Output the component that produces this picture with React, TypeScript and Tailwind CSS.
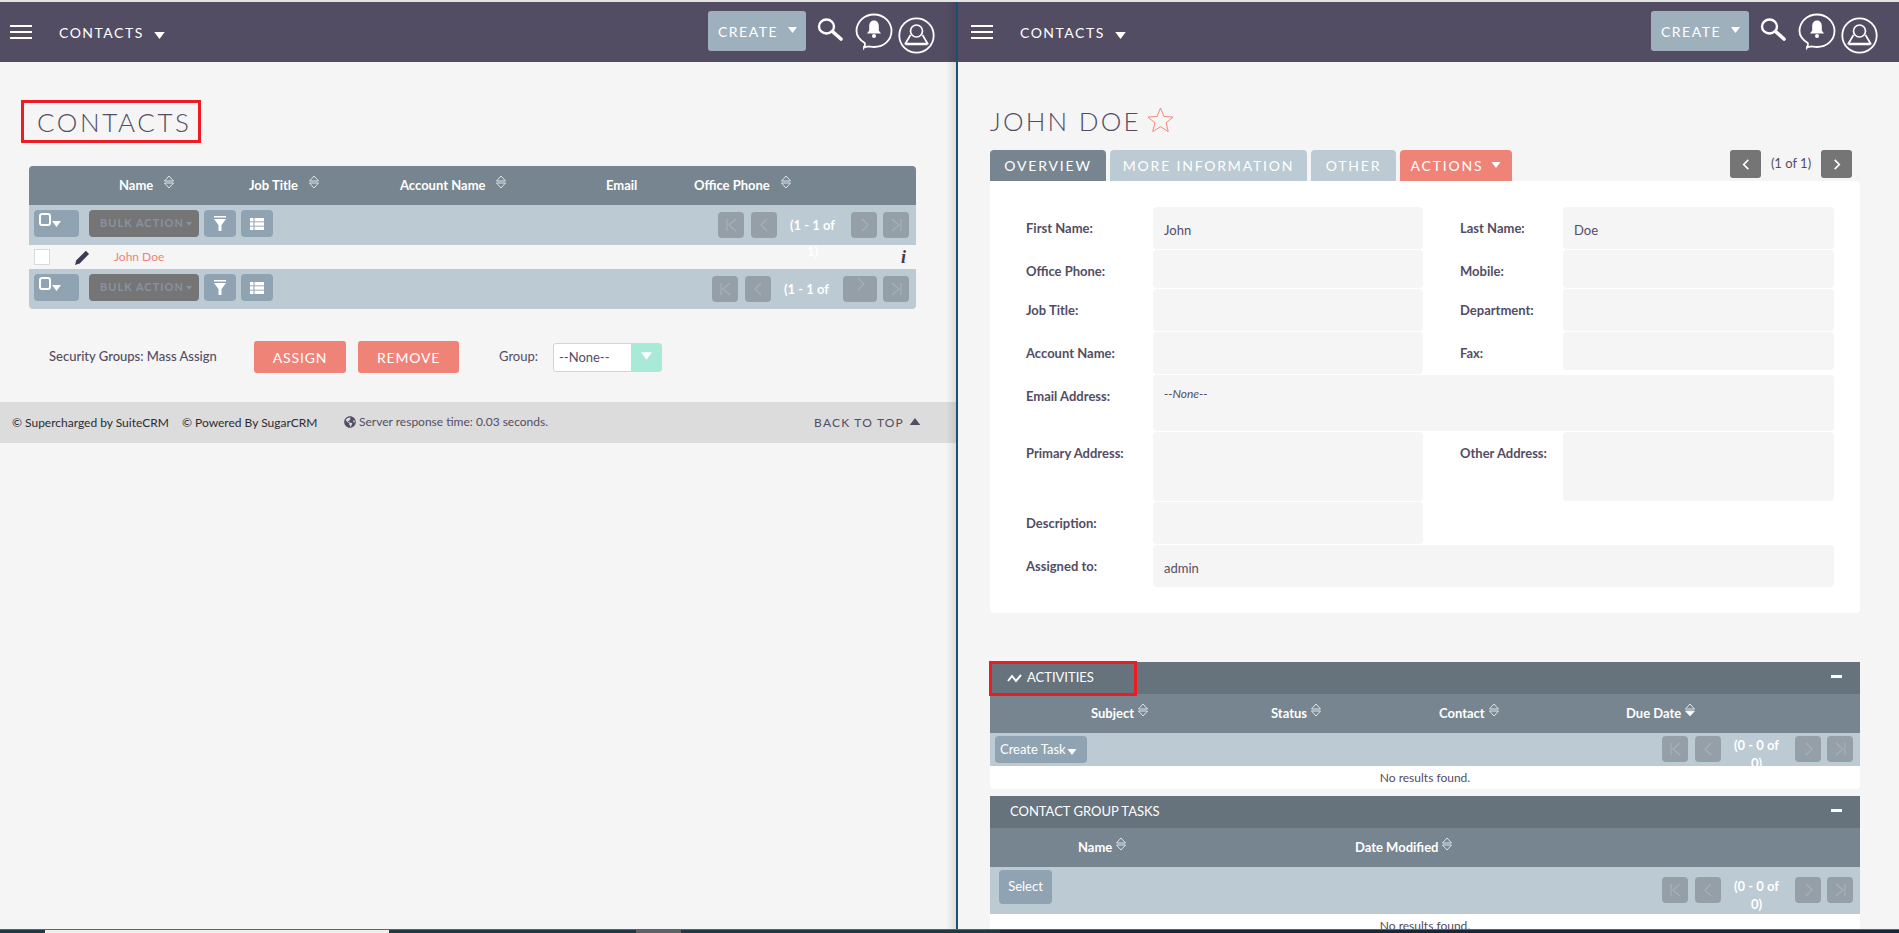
import React from 'react';
import { FaGlobeAmericas } from 'react-icons/fa';

const FONT = "font-['Lato','Open_Sans',sans-serif]";

function Caret({ className = '' }: { className?: string }) {
  return (
    <svg viewBox="0 0 12 8" className={className} fill="currentColor">
      <path d="M0 0h12L6 8z" />
    </svg>
  );
}

function Hamburger() {
  return (
    <svg viewBox="0 0 22 14" className="w-[22px] h-[14px]" fill="#fff">
      <rect y="0" width="22" height="2" />
      <rect y="6" width="22" height="2" />
      <rect y="12" width="22" height="2" />
    </svg>
  );
}

function SearchIcon() {
  return (
    <svg viewBox="0 0 26 23" className="w-[26px] h-[23px] mb-[5px] shrink-0" fill="none" stroke="#fff">
      <ellipse cx="9.5" cy="8.5" rx="7.5" ry="7" strokeWidth="2.4" />
      <path d="M15.5 13.5 24 21" strokeWidth="3.6" strokeLinecap="round" />
    </svg>
  );
}

function BellBubble() {
  return (
    <svg viewBox="0 0 38 39" className="w-[38px] h-[39px] shrink-0" fill="none">
      <path
        d="M9 34.5c1.2-1.8 1.2-3.2.8-4.5C5 27 1.5 22.800 1.500 18 1.500 9 9 1.500 19 1.500S36.500 9 36.500 18 29 34 19 34c-2.500 0-4.800-.5-6-.5-1.200.3-2.400.8-4 .5z"
        stroke="#fff"
        strokeWidth="1.800"
      />
      <path
        d="M19 7.500c-3.300 0-4.800 2.500-4.800 5.500v4.500l-2.200 3h14l-2.200-3V13c0-3-1.500-5.500-4.800-5.500z"
        fill="#fff"
      />
      <circle cx="19" cy="23" r="2" fill="#fff" />
    </svg>
  );
}

function UserCircle() {
  return (
    <svg viewBox="0 0 37 37" className="w-[37px] h-[37px] mt-[7px] shrink-0" fill="none" stroke="#fff">
      <circle cx="18.500" cy="18.500" r="17.200" strokeWidth="1.800" />
      <circle cx="18.500" cy="14" r="6" strokeWidth="1.700" />
      <path d="M12.500 18 7.500 26.500h22L24.500 18" strokeWidth="1.700" />
      <path d="M7.500 27.500h22" strokeWidth="1.500" />
    </svg>
  );
}

function NavBar({ left }: { left: 'narrow' | 'wide' }) {
  return (
    <div className="h-[60px] bg-[#534d64] flex items-center pr-[21px] shrink-0">
      <div className={left === 'narrow' ? 'w-[59px] pl-[10px]' : 'w-[62px] pl-[13px]'}>
        <Hamburger />
      </div>
      <span className="text-white text-[14px] tracking-[1.5px] w-[93px]">CONTACTS</span>
      <Caret className="w-[15px] h-[7px] text-white mt-[7px]" />
      <div className="flex-1" />
      <div className="w-[98px] h-[40px] rounded-[3px] bg-[#9fb0bd] text-white text-[14px] tracking-[1.5px] flex items-center pl-[10px] mr-[11px] mb-[2px]">
        CREATE
        <Caret className="w-[11px] h-[6px] text-white ml-[9px] mb-[2px]" />
      </div>
      <SearchIcon />
      <div className="flex items-center ml-[12px] gap-[5px]">
        <BellBubble />
        <UserCircle />
      </div>
    </div>
  );
}

function SortIcon({ active = false, className = 'mb-[7px]' }: { active?: boolean; className?: string }) {
  return (
    <svg viewBox="0 0 12 14" className={`w-[12px] h-[14px] shrink-0 ${className}`} fill="none" stroke="#dfe5ea" strokeWidth="1">
      <path d="M6 1 10.500 6h-9z" />
      <path d="M1.500 8h9L6 13z" fill={active ? '#fff' : 'none'} />
    </svg>
  );
}

function CheckMenuButton() {
  return (
    <div className="w-[45px] h-[27px] rounded-[4px] bg-[#8fa3b3] flex items-start pl-[5px] pt-[3px]">
      <div className="w-[12px] h-[13px] border-[2px] border-white rounded-[3px]" />
      <Caret className="w-[11px] h-[6px] text-white mt-[8px]" />
    </div>
  );
}

function BulkActionButton() {
  return (
    <div className="w-[110px] h-[27px] rounded-[4px] bg-[#757575] flex items-center pl-[11px] text-[#8593a1] text-[11px] font-bold tracking-[1px] ml-[10px]">
      BULK ACTION
      <Caret className="w-[8px] h-[4px] text-[#8593a1] ml-[1px]" />
    </div>
  );
}

function FilterButton() {
  return (
    <div className="w-[32px] h-[27px] rounded-[4px] bg-[#8fa3b3] flex items-center justify-center ml-[5px]">
      <svg viewBox="0 0 12 15" className="w-[12px] h-[15px]" fill="#fff">
        <rect width="12" height="1.500" />
        <path d="M0 3h12L7.500 9v6h-3V9z" />
      </svg>
    </div>
  );
}

function ListButton() {
  return (
    <div className="w-[32px] h-[27px] rounded-[4px] bg-[#8fa3b3] flex items-center justify-center ml-[5px]">
      <svg viewBox="0 0 14 12" className="w-[14px] h-[12px]" fill="#fff">
        <rect width="3.500" height="3.400" />
        <rect x="4.500" width="9.500" height="3.400" />
        <rect y="4.300" width="3.500" height="3.400" />
        <rect x="4.500" y="4.300" width="9.500" height="3.400" />
        <rect y="8.600" width="3.500" height="3.400" />
        <rect x="4.500" y="8.600" width="9.500" height="3.400" />
      </svg>
    </div>
  );
}

function PagerIcon({ type }: { type: 'first' | 'prev' | 'next' | 'last' }) {
  const paths = {
    first: 'M2 1v12M11 1 4 7l7 6',
    prev: 'M9 1 3 7l6 6',
    next: 'M4 1l6 6-6 6',
    last: 'M11 1v12M2 1l7 6-7 6',
  };
  return (
    <svg viewBox="0 0 13 14" className="w-[13px] h-[14px]" fill="none" stroke="#a3b1bc" strokeWidth="1.300">
      <path d={paths[type]} />
    </svg>
  );
}

function PagerButton({ type, wide = false }: { type: 'first' | 'prev' | 'next' | 'last'; wide?: boolean }) {
  return (
    <div
      className={
        wide
          ? 'w-[34px] h-[26px] rounded-[4px] bg-[#959fa7] flex items-start justify-center pt-[1px]'
          : 'w-[26px] h-[26px] rounded-[4px] bg-[#959fa7] flex items-center justify-center'
      }
    >
      <PagerIcon type={type} />
    </div>
  );
}

function Pager({ label, wideNext = false, raiseText = false }: { label: string; wideNext?: boolean; raiseText?: boolean }) {
  return (
    <div className="flex items-start gap-[6px]">
      <PagerButton type="first" />
      <div className="ml-[1px]">
        <PagerButton type="prev" />
      </div>
      <span
        className={
          raiseText
            ? 'w-[57px] ml-[1px] text-center text-white text-[13px] font-bold leading-[18px]'
            : 'w-[57px] ml-[1px] text-center text-white text-[13px] font-bold leading-[26px]'
        }
      >
        {label}
      </span>
      <div className={wideNext ? 'ml-[2px]' : 'ml-[4px]'}>
        <PagerButton type="next" wide={wideNext} />
      </div>
      <PagerButton type="last" />
    </div>
  );
}

function ListToolbar({ wideNext = false }: { wideNext?: boolean }) {
  return (
    <div className="h-[40px] bg-[#bccad3] flex items-start justify-between pl-[5px] pr-[7px] pt-[5px]">
      <div className="flex">
        <CheckMenuButton />
        <BulkActionButton />
        <FilterButton />
        <ListButton />
      </div>
      <div className="mt-[2px]">
        <Pager label="(1 - 1 of 1)" wideNext={wideNext} />
      </div>
    </div>
  );
}

const listColumns = [
  { label: 'Name', cls: 'w-[130px]', sort: true },
  { label: 'Job Title', cls: 'w-[151px]', sort: true },
  { label: 'Account Name', cls: 'w-[206px]', sort: true },
  { label: 'Email', cls: 'w-[88px]', sort: false },
  { label: 'Office Phone', cls: 'w-[180px]', sort: true },
];

function ContactsPane() {
  return (
    <div className="w-[956px] shrink-0 flex flex-col relative overflow-hidden">
      <NavBar left="narrow" />
      <div className="ml-[21px] mt-[38px] w-[180px] h-[43px] border-[3px] border-[#ed1c24] flex items-center pl-[13px]">
        <h1 className="text-[26px] font-light tracking-[2.600px] text-[#534d64] leading-none">CONTACTS</h1>
      </div>

      <div className="ml-[29px] mt-[23px] w-[887px] rounded-[4px] overflow-hidden">
        <div className="h-[39px] bg-[#778591] flex items-center pl-[90px] text-white text-[13px] font-bold">
          {listColumns.map((c) => (
            <div key={c.label} className={`${c.cls} flex items-center gap-[10px]`}>
              <span>{c.label}</span>
              {c.sort && <SortIcon />}
            </div>
          ))}
        </div>
        <ListToolbar />
        <div className="h-[24px] bg-[#f5f5f5] flex items-center pl-[5px] pr-[10px]">
          <div className="w-[16px] h-[16px] bg-white border border-[#d5dcdf]" />
          <svg viewBox="0 0 16 16" className="w-[15px] h-[15px] ml-[25px]" fill="#3f3a52">
            <path d="M11.500.8 15 4.200 5 14.500 0 16l1.400-5z" />
          </svg>
          <span className="ml-[24px] text-[12px] text-[#f08377]">John Doe</span>
          <div className="flex-1" />
          <span className="font-['Liberation_Serif',serif] italic font-bold text-[18px] text-[#3f3a52] leading-none">i</span>
        </div>
        <ListToolbar wideNext />
      </div>

      <div className="flex items-center h-[32px] mt-[32px] pl-[49px] text-[13px] text-[#534d64]">
        <span className="font-medium w-[205px]">Security Groups: Mass Assign</span>
        <div className="w-[92px] h-[32px] rounded-[3px] bg-[#f08377] text-white text-[14px] tracking-[0.8px] flex items-center justify-center">
          ASSIGN
        </div>
        <div className="w-[101px] h-[32px] rounded-[3px] bg-[#f08377] text-white text-[14px] tracking-[0.8px] flex items-center justify-center ml-[12px]">
          REMOVE
        </div>
        <span className="ml-[40px] w-[54px]">Group:</span>
        <div className="w-[109px] h-[29px] rounded-[3px] border border-[#a9e9d7] bg-white flex items-stretch">
          <span className="flex-1 pl-[5px] text-[13px] leading-[27px]">--None--</span>
          <div className="w-[30px] bg-[#a9e9d7] flex items-start justify-center pt-[7px]">
            <Caret className="w-[11px] h-[10px] text-white" />
          </div>
        </div>
      </div>

      <div className="mt-[29px] h-[41px] bg-[#dcdcdc] flex items-center pl-[12px] pr-[35px] text-[12px]">
        <span className="text-[#2b2b33] w-[170px]">© Supercharged by SuiteCRM</span>
        <span className="text-[#2b2b33] w-[162px]">© Powered By SugarCRM</span>
        <FaGlobeAmericas className="w-[12px] h-[12px] text-[#534d64] mb-[2px]" />
        <span className="ml-[3px] text-[#534d64] mb-[2px]">Server response time: 0.03 seconds.</span>
        <div className="flex-1" />
        <span className="text-[#534d64] text-[12px] tracking-[1.200px]">BACK TO TOP</span>
        <Caret className="w-[12px] h-[7px] text-[#534d64] rotate-180 ml-[5px] mb-[2px]" />
      </div>

      <div className="absolute right-0 top-0 bottom-0 w-[10px] bg-gradient-to-r from-transparent to-black/10" />
    </div>
  );
}

function Field({ children, cls, muted = false }: { children?: React.ReactNode; cls: string; muted?: boolean }) {
  return (
    <div className={`${cls} rounded-[4px] bg-[#f5f5f5] pl-[11px] pt-[13px] text-[13px] leading-[20px] ${muted ? 'text-[#534d64]' : 'text-[#534d64]'}`}>
      {children}
    </div>
  );
}

function Label({ children, cls }: { children: React.ReactNode; cls: string }) {
  return <div className={`${cls} shrink-0 pt-[11px] text-[13px] font-bold leading-[20px] text-[#534d64]`}>{children}</div>;
}

function TwoColRow({
  h,
  a,
  b,
  aValue,
  bValue,
  bShort = false,
}: {
  h: string;
  a: string;
  b?: string;
  aValue?: string;
  bValue?: string;
  bShort?: boolean;
}) {
  return (
    <div className={`flex ${h}`}>
      <Label cls="w-[127px]">{a}</Label>
      <Field cls="w-[270px] h-full">{aValue}</Field>
      {b && (
        <>
          <Label cls="w-[103px] ml-[37px]">{b}</Label>
          <Field cls={bShort ? 'w-[271px] h-[38px]' : 'w-[271px] h-full'}>{bValue}</Field>
        </>
      )}
    </div>
  );
}

function PanelPager() {
  return <Pager label="(0 - 0 of 0)" raiseText />;
}

function PanelHeader({ children }: { children: React.ReactNode }) {
  return (
    <div className="h-[32px] bg-[#66737d] flex items-center text-white text-[13px] pr-[18px]">
      {children}
      <div className="flex-1" />
      <div className="w-[11px] h-[3px] bg-white mb-[4px]" />
    </div>
  );
}

function ColumnHeader({ cols, pl }: { cols: { label: string; cls: string; active?: boolean }[]; pl: string }) {
  return (
    <div className={`h-[39px] bg-[#778591] flex items-center ${pl} text-white text-[13px] font-bold`}>
      {cols.map((c) => (
        <div key={c.label} className={`${c.cls} flex items-center gap-[3px]`}>
          <span>{c.label}</span>
          <SortIcon active={c.active} />
        </div>
      ))}
    </div>
  );
}

function DetailPane() {
  return (
    <div className="flex-1 min-w-0 flex flex-col overflow-hidden">
      <NavBar left="wide" />
      <div className="pl-[32px] pr-[39px]">
        <div className="mt-[43px] mb-[13px] h-[32px] flex items-center">
          <h2 className="text-[26px] font-light tracking-[2.200px] text-[#534d64] leading-none">JOHN DOE</h2>
          <svg viewBox="0 0 28 26" className="w-[27px] h-[25px] ml-[6px] mb-[3px]" fill="none" stroke="#f08377" strokeWidth="1">
            <path d="M14 1l3.600 8.800 9.400.7-7.200 6 2.300 9-8.100-5-8.100 5 2.300-9L1 10.500l9.400-.7z" />
          </svg>
        </div>

        <div className="h-[31px] flex items-start text-white text-[14px] tracking-[1.800px]">
          <div className="w-[116px] h-[31px] rounded-t-[4px] bg-[#778591] flex items-center justify-center">OVERVIEW</div>
          <div className="w-[197px] h-[31px] rounded-t-[4px] bg-[#bccad3] flex items-center justify-center ml-[4px]">MORE INFORMATION</div>
          <div className="w-[85px] h-[31px] rounded-t-[4px] bg-[#bccad3] flex items-center justify-center ml-[4px]">OTHER</div>
          <div className="w-[112px] h-[31px] rounded-t-[4px] bg-[#f08377] flex items-center justify-center gap-[8px] ml-[4px]">
            ACTIONS
            <Caret className="w-[10px] h-[6px] text-white mb-[1px]" />
          </div>
          <div className="flex-1" />
          <div className="flex items-start tracking-normal mr-[8px]">
            <div className="w-[31px] h-[28px] rounded-[3px] bg-[#757575] flex items-center justify-center">
              <svg viewBox="0 0 8 12" className="w-[8px] h-[11px]" fill="none" stroke="#fff" strokeWidth="1.800"><path d="M6.500 1 1.500 6l5 5" /></svg>
            </div>
            <span className="w-[60px] text-center text-[13px] leading-[26px] text-[#534d64]">(1 of 1)</span>
            <div className="w-[31px] h-[28px] rounded-[3px] bg-[#757575] flex items-center justify-center">
              <svg viewBox="0 0 8 12" className="w-[8px] h-[11px]" fill="none" stroke="#fff" strokeWidth="1.800"><path d="M1.500 1l5 5-5 5" /></svg>
            </div>
          </div>
        </div>

        <div className="bg-white rounded-b-[4px] rounded-tr-[4px] pl-[36px] pt-[26px] pb-[26px] flex flex-col gap-[1px]">
          <TwoColRow h="h-[42px]" a="First Name:" b="Last Name:" aValue="John" bValue="Doe" />
          <TwoColRow h="h-[38px]" a="Office Phone:" b="Mobile:" />
          <TwoColRow h="h-[42px]" a="Job Title:" b="Department:" />
          <TwoColRow h="h-[42px]" a="Account Name:" b="Fax:" bShort />
          <div className="flex h-[56px]">
            <Label cls="w-[127px]">Email Address:</Label>
            <div className="w-[681px] h-full rounded-[4px] bg-[#f5f5f5] pl-[11px] pt-[9px] text-[12px] italic leading-[20px] text-[#534d64]">--None--</div>
          </div>
          <TwoColRow h="h-[69px]" a="Primary Address:" b="Other Address:" />
          <TwoColRow h="h-[42px]" a="Description:" />
          <div className="flex h-[42px]">
            <Label cls="w-[127px]">Assigned to:</Label>
            <Field cls="w-[681px] h-full">admin</Field>
          </div>
        </div>

        <div className="mt-[49px] rounded-t-[4px] relative">
          <PanelHeader>
            <svg viewBox="0 0 15 10" className="w-[15px] h-[10px] ml-[17px]" fill="none" stroke="#fff" strokeWidth="2">
              <path d="M1 8 5 3l4 5 5-6" />
            </svg>
            <span className="ml-[5px]">ACTIVITIES</span>
          </PanelHeader>
          <div className="absolute -left-[1px] -top-[1px] w-[148px] h-[35px] border-[3px] border-[#ed1c24]" />
          <ColumnHeader
            pl="pl-[101px]"
            cols={[
              { label: 'Subject', cls: 'w-[180px]' },
              { label: 'Status', cls: 'w-[168px]' },
              { label: 'Contact', cls: 'w-[187px]' },
              { label: 'Due Date', cls: 'w-[100px]', active: true },
            ]}
          />
          <div className="h-[33px] bg-[#bccad3] flex items-start justify-between pl-[5px] pr-[7px] pt-[3px]">
            <div className="w-[92px] h-[27px] rounded-[4px] bg-[#8fa3b3] flex items-center pl-[5px] text-white text-[13px]">
              Create Task
              <Caret className="w-[12px] h-[6px] text-white mt-[4px]" />
            </div>
            <PanelPager />
          </div>
          <div className="h-[23px] bg-white rounded-b-[4px] flex items-center justify-center text-[12px] text-[#534d64]">
            No results found.
          </div>
        </div>

        <div className="mt-[7px] rounded-t-[4px]">
          <PanelHeader>
            <span className="ml-[20px]">CONTACT GROUP TASKS</span>
          </PanelHeader>
          <ColumnHeader
            pl="pl-[88px]"
            cols={[
              { label: 'Name', cls: 'w-[277px]' },
              { label: 'Date Modified', cls: 'w-[200px]' },
            ]}
          />
          <div className="h-[47px] bg-[#bccad3] flex items-start justify-between pl-[9px] pr-[7px] pt-[3px]">
            <div className="w-[53px] h-[34px] rounded-[4px] bg-[#8fa3b3] flex items-center justify-center text-white text-[13px]">
              Select
            </div>
            <div className="mt-[7px]">
              <PanelPager />
            </div>
          </div>
          <div className="h-[23px] bg-white flex items-center justify-center text-[12px] text-[#534d64]">
            No results found.
          </div>
        </div>
      </div>
    </div>
  );
}

export default function App() {
  return (
    <div className={`${FONT} w-[1899px] h-[933px] bg-[#f5f5f5] flex flex-col overflow-hidden`}>
      <div className="h-[2px] bg-[#e4e4e4] shrink-0" />
      <div className="flex flex-1 min-h-0">
        <ContactsPane />
        <div className="w-[2px] bg-[#1d4f6e] shrink-0" />
        <DetailPane />
      </div>
      <div className="h-[4px] shrink-0 flex border-t border-[#1f7a9a]">
        <div className="w-[45px] bg-[#1c3a44]" />
        <div className="w-[344px] bg-[#eef0ea]" />
        <div className="w-[247px] bg-[#1c3a44]" />
        <div className="w-[45px] bg-[#5b6268]" />
        <div className="w-[319px] bg-[#1c3a44]" />
        <div className="flex-1 bg-[#14283a]" />
      </div>
    </div>
  );
}
